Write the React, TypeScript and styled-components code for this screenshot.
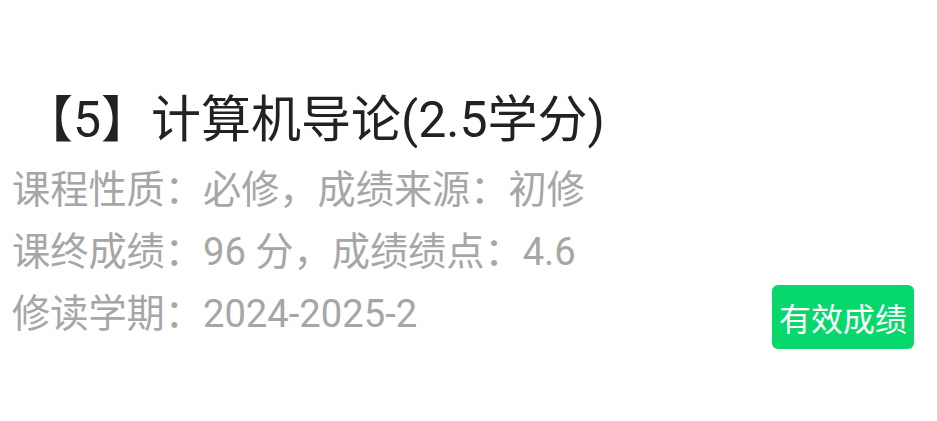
import styled, {createGlobalStyle} from "styled-components";

const GlobalStyle = createGlobalStyle`
  html, body {
    margin: 0;
    padding: 0;
    background: #fff;
  }

  body {
    font-family: Roboto, "Noto Sans CJK SC", sans-serif;
  }
`;

const Card = styled.div`
  width: 937px;
  height: 421px;
  box-sizing: border-box;
  padding: 81px 23px 0 12px;
  background: #fff;
`;

const Title = styled.h2`
  margin: 0 0 0 11px;
  font-size: 50px;
  font-weight: 400;
  line-height: 78px;
  color: #222;
  white-space: nowrap;
`;

const Bottom = styled.div`
  display: flex;
  align-items: flex-end;
  justify-content: space-between;
`;

const Info = styled.div`
  display: flex;
  flex-direction: column;
`;

const Line = styled.div`
  font-size: 38.2px;
  line-height: 62px;
  color: #a6a6a6;
  white-space: nowrap;
`;

const Badge = styled.span`
  display: inline-flex;
  align-items: center;
  justify-content: center;
  height: 64px;
  padding: 0 7px;
  margin-bottom: -4px;
  border-radius: 6px;
  background: #06d86c;
  color: #fff;
  font-size: 32px;
`;

export default function App() {
    const lines = [
        "课程性质：必修，成绩来源：初修",
        "课终成绩：96 分，成绩绩点：4.6",
        "修读学期：2024-2025-2",
    ];

    return (
        <>
            <GlobalStyle/>
            <Card>
                <Title>【5】计算机导论(2.5学分)</Title>
                <Bottom>
                    <Info>
                        {lines.map((text, index) => (
                            <Line key={index}>{text}</Line>
                        ))}
                    </Info>
                    <Badge>有效成绩</Badge>
                </Bottom>
            </Card>
        </>
    );
}
